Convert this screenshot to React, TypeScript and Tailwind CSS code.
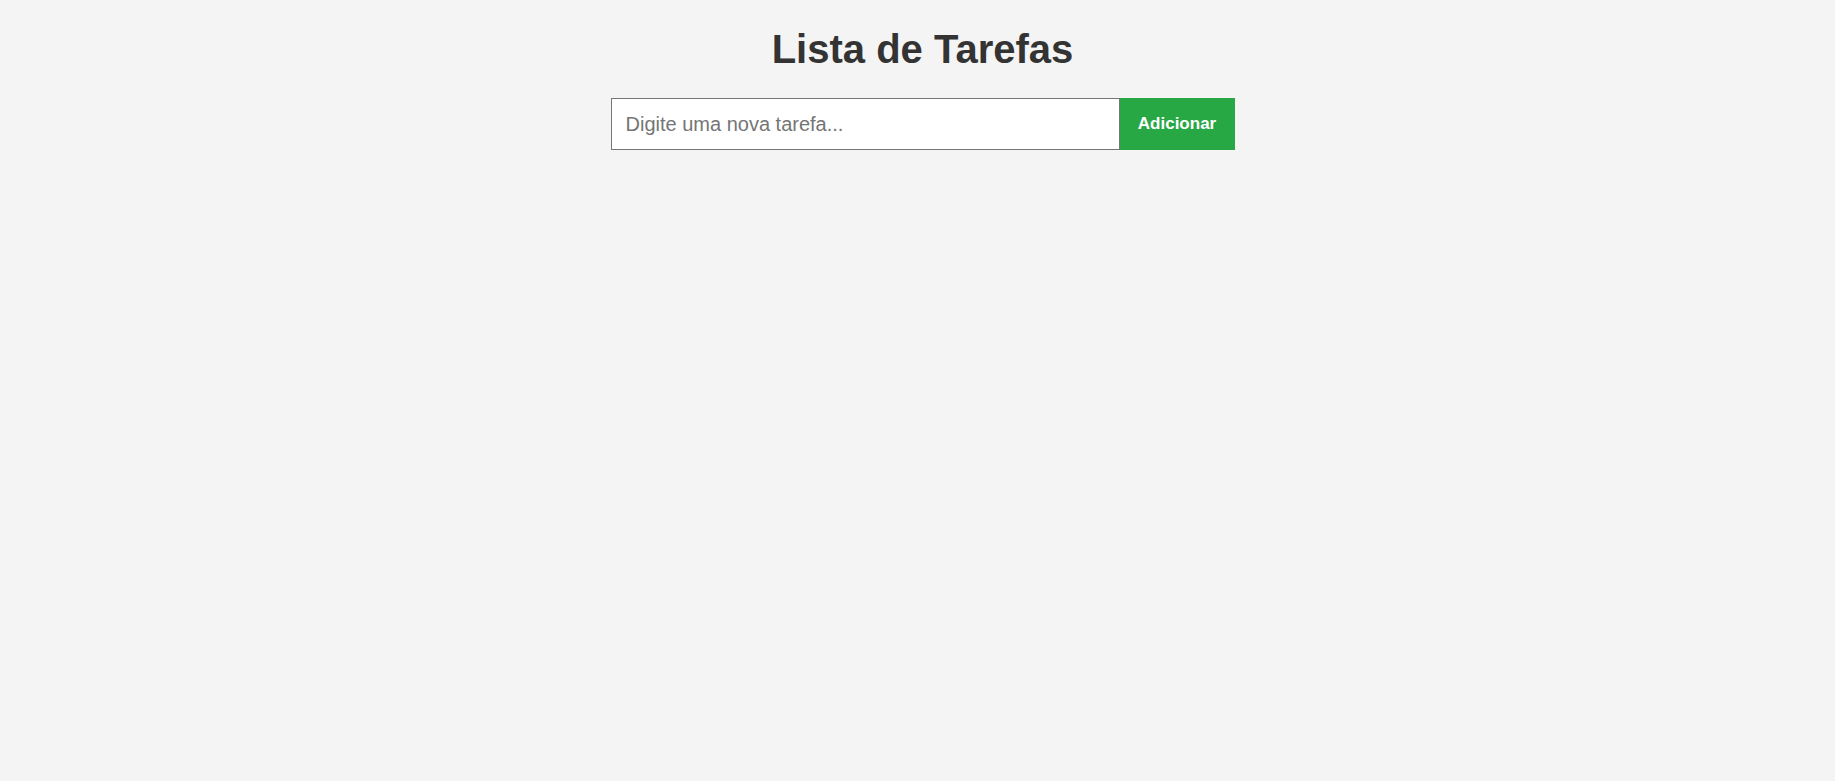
import { useState } from "react";

export default function App() {
  const [task, setTask] = useState("");

  return (
    <div
      className="min-h-screen bg-[#f4f4f4] pl-[10px] pt-[26px]"
      style={{ fontFamily: '"Liberation Sans", Arial, sans-serif' }}
    >
      <h1 className="text-center text-[40px] font-bold leading-[46px] text-[#333333]">
        Lista de Tarefas
      </h1>
      <div className="mt-[26px] flex justify-center">
        <input
          type="text"
          value={task}
          onChange={(e) => setTask(e.target.value)}
          placeholder="Digite uma nova tarefa..."
          className="h-[52px] w-[509px] border border-[#767676] bg-white px-[14px] text-[20px] text-[#333333] outline-none placeholder:text-[#757575]"
        />
        <button
          type="button"
          className="h-[52px] w-[115px] bg-[#28a745] text-[17px] font-bold text-white"
        >
          Adicionar
        </button>
      </div>
    </div>
  );
}
